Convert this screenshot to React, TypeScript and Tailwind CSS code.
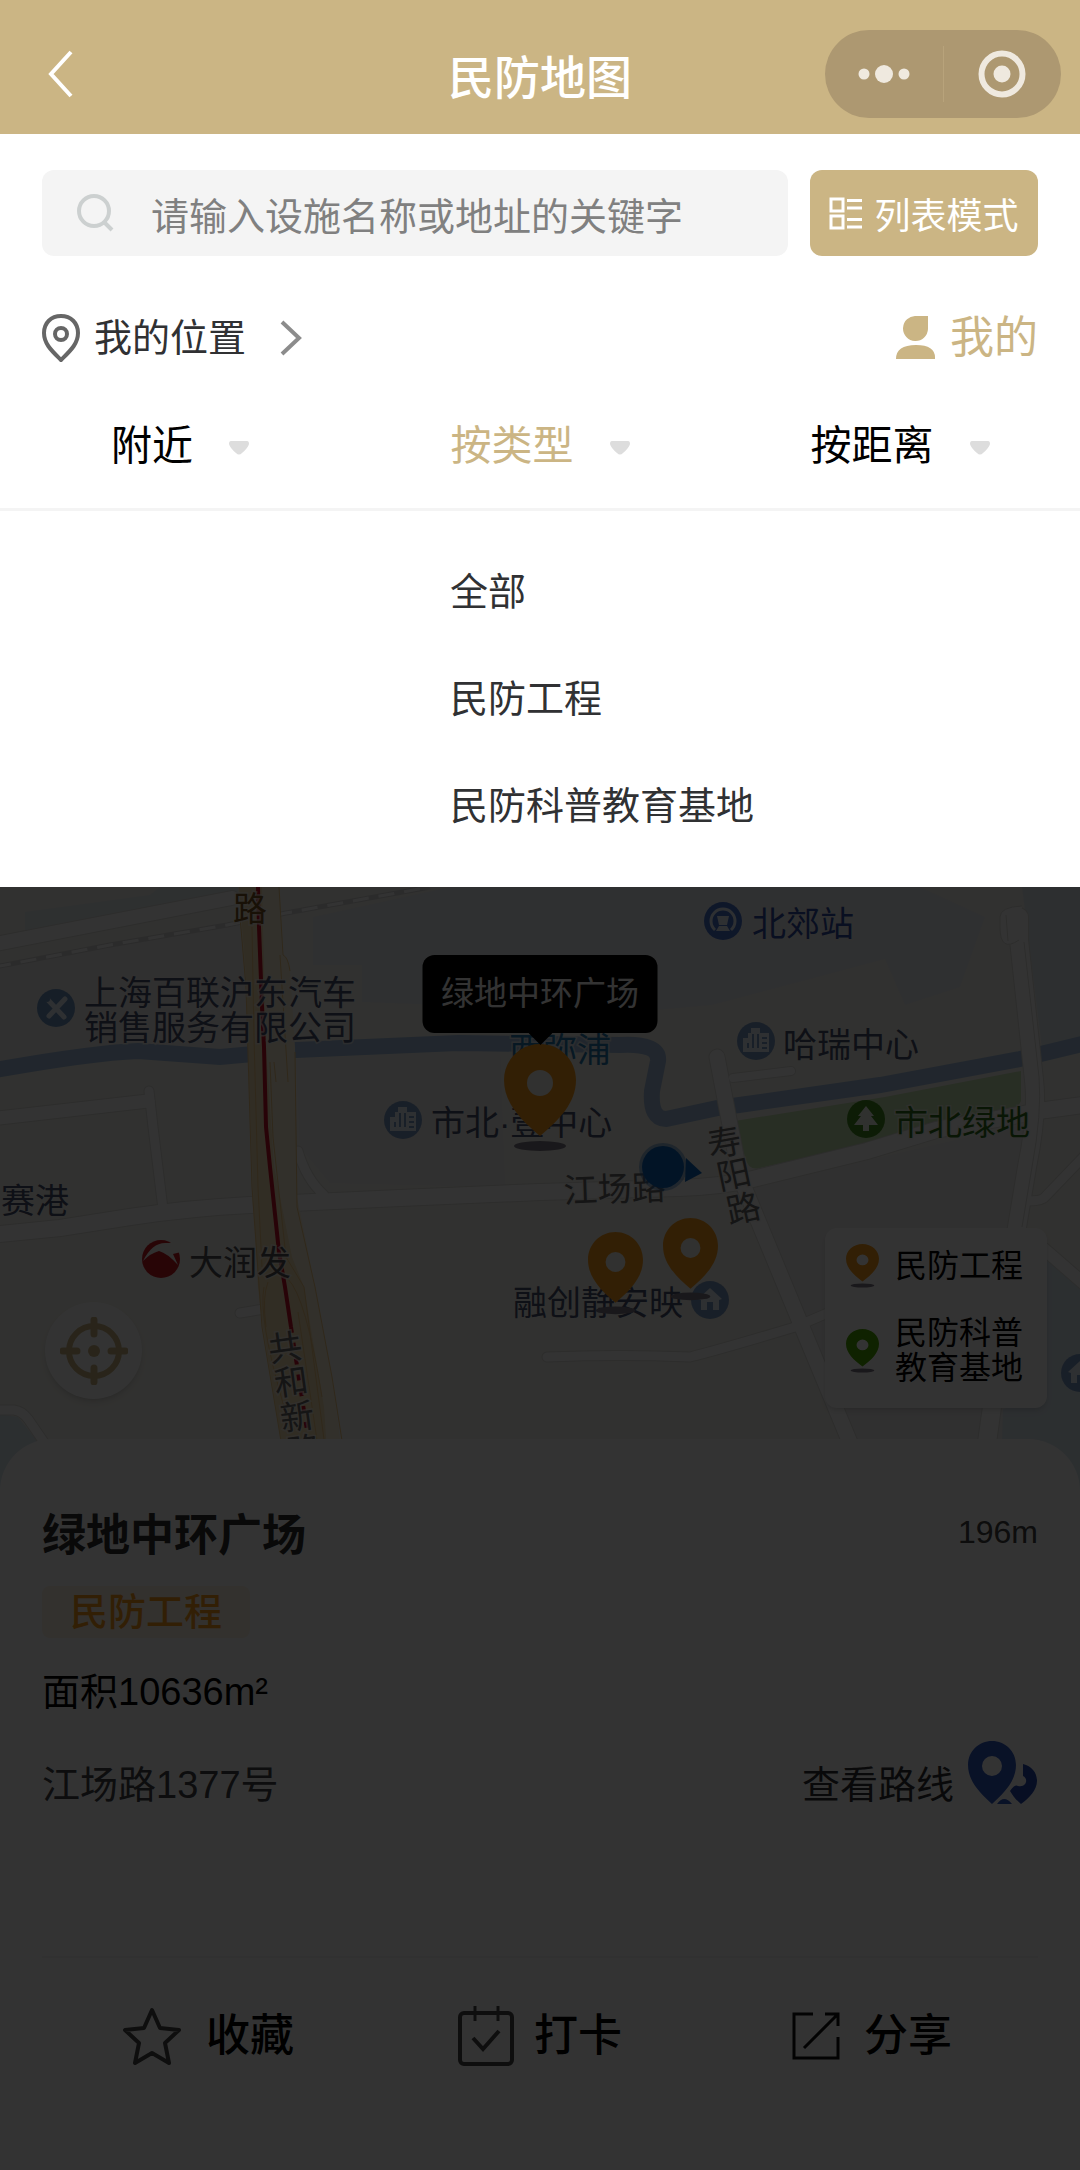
import { useState, type ReactNode } from "react";

const FILTERS = ["附近", "按类型", "按距离"];
const TYPES = ["全部", "民防工程", "民防科普教育基地"];

const ROADS = [
  { d: "M-10 58 L232 11", w: 14 },
  { d: "M-10 232 L148 214", w: 13 },
  { d: "M149 204 L153 240 L163 322", w: 9 },
  { d: "M-10 348 L60 341 L130 330 Q190 321 250 318 L400 311 L540 305 L678 301 Q720 300 753 292 L867 264 L936 243 L1046 223 L1090 217", w: 16 },
  { d: "M298 264 Q306 292 324 308", w: 9 },
  { d: "M717 170 L740 290 L802 440 L856 570", w: 15 },
  { d: "M733 191 L791 184", w: 8 },
  { d: "M1019 30 L1019 53 L1034 193 Q1038 226 1027 280 L1017 340 L985 570", w: 18 },
  { d: "M1090 263 L1045 310 Q1042 314 1028 314", w: 9 },
  { d: "M1044 362 L1090 402", w: 12 },
  { d: "M547 470 Q620 467 690 470 Q722 462 795 440 L830 425", w: 9 },
  { d: "M240 426 L264 422", w: 9 },
  { d: "M-5 523 L14 523 Q22 524 28 532 L50 564", w: 9 },
];

const Pin = ({ color, className }: { color: string; className: string }) => (
  <svg viewBox="0 0 72 108" preserveAspectRatio="none" className={className} aria-hidden="true">
    <ellipse cx="36" cy="102" rx="26" ry="5" fill="#7d7886" />
    <path
      fillRule="evenodd"
      fill={color}
      d="M36 0C16 0 0 16 0 36c0 23 17 40 36 56 19-16 36-33 36-56C72 16 56 0 36 0Zm0 26a13 13 0 1 1 0 26 13 13 0 0 1 0-26Z"
    />
  </svg>
);

const Poi = ({ x, y, color, children }: { x: number; y: number; color: string; children: ReactNode }) => (
  <g transform={`translate(${x} ${y})`}>
    <circle r="19" fill={color} />
    {children}
  </g>
);

const Building = () => (
  <g>
    <path d="M-13 11V-3H-8V-8H-5V-13H4V-8H13V11Z" fill="#e6eef8" />
    <path d="M-8 2V7 M-3-7V7 M2-7V7 M6-3H11 M6 2H11 M6 7H11" stroke="#7b9cc6" strokeWidth="2" />
  </g>
);

const House = () => <path d="M-12 -1 0 -12 12 -1 9 0V10H3V2H-3v8h-6V0Z" fill="#e6eef8" />;

const CityMap = () => (
  <svg
    viewBox="0 0 1080 612"
    preserveAspectRatio="xMidYMin slice"
    className="h-full w-full text-[34px]"
    role="img"
    aria-label="地图"
  >
    <rect width="1080" height="612" fill="#f4f3ed" />
    <path d="M0 78 240 36 250 166 140 160 0 178Z M296 172 500 162 505 300 330 296 300 260Z" fill="#efeeee" />
    <path d="M25 25 150 8 160 0H240V8L25 50Z" fill="#e6eef0" />
    <path d="M313 30 450 0H920L985 30 960 100 905 118 885 72 712 118 600 128 540 122 362 115V78H313Z" fill="#eceff3" />
    <path d="M1022 0H1080V157L1043 170Z" fill="#e2ebee" />
    <path d="M750 300 860 275 1035 235 1028 280 1005 420 1010 560H856L802 440Z" fill="#efeeef" />
    <path d="M1047 372 1080 400V612H1000L1003 522 1047 510Z M0 527 18 530 50 570V612H0Z" fill="#dde8f0" />
    <path d="M735 234 885 210 1021 184V214Q1018 222 1005 224L760 281Q748 284 745 270Z" fill="#c6e3b2" />
    <path
      d="M-10 184Q90 166 138 164L220 170 296 163 458 156 620 158Q660 156 658 174L652 204Q650 232 666 232L718 221 880 198 1020 172 1090 155"
      fill="none"
      stroke="#a3bfe0"
      strokeWidth="16"
    />

    {/* Railway */}
    <path d="M-5 80 110 58 227 38 286 26 430 0" fill="none" stroke="#d6d6d6" strokeWidth="5" />
    <path d="M-5 80 110 58 227 38 286 26 430 0" fill="none" stroke="#fff" strokeWidth="3" strokeDasharray="16 10" />

    {/* Streets, casing first */}
    {ROADS.map(({ d, w }) => (
      <path key={d} d={d} fill="none" stroke="#dededa" strokeWidth={w + 2} strokeLinecap="round" />
    ))}
    {ROADS.map(({ d, w }) => (
      <path key={d} d={d} fill="none" stroke="#fff" strokeWidth={w} strokeLinecap="round" />
    ))}
    <path d="M1019 53Q1000 66 1000 40V30Q1000 20 1022 19" fill="#fff" stroke="#dededa" strokeWidth="1" />
    <path d="M1006 28 1008 54 M1024 55 1039 190 Q1042 226 1032 280L1022 340" fill="none" stroke="#dededa" strokeWidth="1" />

    {/* Elevated highway */}
    <path d="M238 0H279L282 68Q288 70 290 84L295 160 297 310 315 400 332 490 345 590V612H292L281 552 262 440 252 310 248 140Z" fill="#f8efd6" />
    <path d="M239 0H262L266 160 274 280 292 370 304 400 324 520 330 612H290L281 552 263 440 258 400 253 300 248 162 246 90Z" fill="#f5dfb2" />
    <g fill="none" stroke="#efc783" strokeWidth="1">
      <path d="M240 30 246 100 252 300 262 440 282 560" />
      <path d="M252 40 254 150 258 300 262 380" />
      <path d="M270 175 273 250 286 370 304 400 325 560" />
      <path d="M279 0 283 68Q288 70 290 84 M274 175 276 195 M280 68 288 195 M295 165 297 320 315 400 332 490 343 560" />
      <path d="M268 395Q262 410 266 440 M264 400Q258 430 284 520 M288 392Q306 410 322 510 M298 425 318 560" />
    </g>
    <path d="M258 0 259 40 262 120 264 160 266 240 270 280 279 365 285 400 291 440" fill="none" stroke="#c8102a" strokeWidth="4" />
    <path d="M291 440 308 550" fill="none" stroke="#c8102a" strokeWidth="4" strokeDasharray="6 10" />

    <Poi x={56} y={121} color="#6f97c4">
      <path d="M-8-8 8 9 M9-9-7 8" stroke="#e6eef8" strokeWidth="5" strokeLinecap="round" />
      <circle cx="-9" cy="-9" r="3" fill="#6f97c4" />
    </Poi>
    <Poi x={723} y={34} color="#4872ce">
      <path d="M-8 9A12 12 0 1 1 8 9" fill="none" stroke="#e6eef8" strokeWidth="3" />
      <path d="M-6-5H6L4 4H-4Z M-7 10H7L4 5H-4Z" fill="#e6eef8" />
    </Poi>
    <Poi x={756} y={154} color="#7b9cc6"><Building /></Poi>
    <Poi x={403} y={233} color="#7b9cc6"><Building /></Poi>
    <Poi x={866} y={232} color="#418c1f">
      <path d="M0-13 8-3H5L12 6H3V12H-3V6H-12L-5-3H-8Z" fill="#eef5ea" />
    </Poi>
    <Poi x={161} y={372} color="#c51a22">
      <path d="M-18 2Q-9-16 4-16L19-16 20-7 12-5 17 6Q6-6-2-8-10-6-18 2Z" fill="#f4f3ed" />
    </Poi>
    <Poi x={710} y={413} color="#7b9cc6"><House /></Poi>
    <Poi x={1080} y={486} color="#7b9cc6"><House /></Poi>

    {/* Place names */}
    <g stroke="#f4f3ed" strokeWidth="3" paintOrder="stroke" strokeOpacity="0.7">
      <g fill="#495270">
        <text x="84" y="118">上海百联沪东汽车</text>
        <text x="84" y="153">销售服务有限公司</text>
        <text x="783" y="170">哈瑞中心</text>
        <text x="431" y="248">市北·壹中心</text>
        <text x="513" y="428">融创静安映</text>
        <text x="1" y="326">赛港</text>
      </g>
      <text x="752" y="49" fill="#2f4da4">北郊站</text>
      <text x="509" y="175" fill="#2577ae">西弥浦</text>
      <text x="894" y="248" fill="#31701d">市北绿地</text>
      <text x="189" y="388" fill="#505055">大润发</text>
      <text x="233" y="34" fill="#7b5523">路</text>
      <g fill="#68686b">
        <text x="564" y="316" transform="rotate(-2 564 316)">江场路</text>
        <text x="707" y="268" transform="rotate(-10 722 254)">寿</text>
        <text x="717" y="300" transform="rotate(-12 733 288)">阳</text>
        <text x="726" y="334" transform="rotate(-12 742 320)">路</text>
        <text x="268" y="473" transform="rotate(-8 284 460)">共</text>
        <text x="274" y="507" transform="rotate(-8 291 493)">和</text>
        <text x="280" y="542" transform="rotate(-8 297 528)">新</text>
        <text x="286" y="576" transform="rotate(-8 302 560)">路</text>
      </g>
    </g>

    {/* Current position */}
    <circle cx="663" cy="280" r="24" fill="#1b6cc4" opacity="0.4" />
    <circle cx="663" cy="280" r="21" fill="#0d66bd" />
    <path d="M686 271 702 286 685 295Z" fill="#0d66bd" />
  </svg>
);

const FilterBar = ({ active, onSelect }: { active: string; onSelect: (name: string) => void }) => (
  <div className="grid grid-cols-3 border-b-3 border-[#f4f4f4] pb-8">
    {FILTERS.map((name) => (
      <button
        key={name}
        type="button"
        onClick={() => onSelect(name)}
        className={`flex items-center justify-center gap-9 text-[41px] leading-[60px] ${
          name === active ? "text-[#cbb584]" : "text-black"
        }`}
      >
        {name}
        <svg viewBox="0 0 20 14" className="mt-1 h-3.5 w-5" aria-hidden="true">
          <path d="M2 0H18Q20 0 20 3 19 7 13 12 10 15 7 12 1 7 0 3 0 0 2 0Z" fill="#ddd" />
        </svg>
      </button>
    ))}
  </div>
);

const Legend = () => (
  <ul className="absolute top-[341px] right-[33px] flex w-[222px] flex-col gap-7 rounded-xl bg-white pt-4 pb-[22px] pl-[21px] text-[32px] leading-[35px] text-black shadow-md">
    <li className="flex items-center gap-4">
      <Pin color="#fa9c1c" className="h-11 w-[33px]" />
      民防工程
    </li>
    <li className="flex items-center gap-4">
      <Pin color="#4da800" className="h-11 w-[33px]" />
      <span>
        民防科普
        <br />
        教育基地
      </span>
    </li>
  </ul>
);

const PlaceSheet = () => (
  <section className="relative -mt-15 flex-1 rounded-t-[52px] bg-white px-[42px] pt-[67px]">
    <div className="flex items-start justify-between">
      <h2 className="text-[44px] leading-[60px] font-bold text-[#303030]">绿地中环广场</h2>
      <span className="text-[32px] leading-[52px] text-[#404040]">196m</span>
    </div>
    <span className="mt-5 inline-block rounded-lg bg-[#fef4e6] px-7 text-[38px] leading-[52px] font-medium text-[#fa9c1c]">
      民防工程
    </span>
    <p className="mt-[26px] text-[38px] leading-[56px] text-black">面积10636m²</p>
    <div className="mt-[21px] flex items-end justify-between text-[38px] leading-[40px]">
      <p className="text-[#404246]">江场路1377号</p>
      <button type="button" className="flex items-end gap-3.5 text-[#303133]">
        查看路线
        <svg viewBox="0 0 70 64" className="h-16 w-[70px]" aria-hidden="true">
          <path
            fillRule="evenodd"
            fill="#3159c4"
            d="M24 0C11 0 0 10 0 24c0 16 12 28 24 39 12-11 24-23 24-39C48 10 37 0 24 0Zm0 15a10 10 0 1 1 0 20 10 10 0 0 1 0-20Z"
          />
          <path fill="#2448b0" d="M55 23c9 2 14 9 14 17 0 9-8 17-16 23-5-4-8-8-11-13q5-7 8-5c8 2 11-7 5-10Z" />
          <path fill="#3159c4" d="M29 63q7-10 15 0Z" />
        </svg>
      </button>
    </div>
    <div className="mt-[151px] grid grid-cols-3 border-t-2 border-[#f2f2f2] pt-12 text-[44px] leading-[60px] font-medium text-black">
      <button type="button" className="flex items-center justify-center gap-6">
        <svg viewBox="0 0 60 60" className="size-15" aria-hidden="true">
          <path
            d="M30 4 38 22 57 24 43 37 47 57 30 47 13 57 17 37 3 24 22 22Z"
            fill="none"
            stroke="#484848"
            strokeWidth="4"
            strokeLinejoin="round"
          />
        </svg>
        收藏
      </button>
      <button type="button" className="flex items-center justify-center gap-5">
        <svg viewBox="0 0 56 60" className="h-15 w-14" fill="none" stroke="#484848" strokeWidth="4" aria-hidden="true">
          <rect x="2" y="7" width="52" height="51" rx="4" />
          <path d="M17 0V15 M40 0V15" strokeWidth="3" />
          <path d="M15 32 25 43 41 25" />
        </svg>
        打卡
      </button>
      <button type="button" className="flex items-center justify-center gap-6">
        <svg viewBox="0 0 48 48" className="size-12" fill="none" stroke="#101010" strokeWidth="3" aria-hidden="true">
          <path d="M21 2H2V46H46V25 M33 2H46V14 M46 2 12 36" />
        </svg>
        分享
      </button>
    </div>
  </section>
);

export default function App() {
  const [activeFilter, setActiveFilter] = useState("按类型");

  return (
    <div className="flex min-h-screen flex-col bg-white font-['Liberation_Sans','Noto_Sans_CJK_SC',sans-serif]">
      <header className="relative flex h-[134px] items-center justify-between bg-[#cbb584] pt-3.5 pr-[19px] pl-12 font-['Noto_Sans_CJK_SC',sans-serif]">
        <button type="button" aria-label="返回">
          <svg viewBox="0 0 26 48" className="h-12 w-[26px]" aria-hidden="true">
            <path d="M23 2 3 24 23 46" fill="none" stroke="#fff" strokeWidth="4" />
          </svg>
        </button>
        <h1 className="absolute inset-x-0 text-center text-[46px] leading-[60px] font-medium text-white">民防地图</h1>
        <div className="relative flex h-[88px] w-[236px] items-center rounded-full bg-[#ad9871]">
          <button type="button" aria-label="更多" className="flex flex-1 justify-center">
            <svg viewBox="0 0 52 20" className="h-5 w-[52px]" fill="#efe9df" aria-hidden="true">
              <circle cx="6" cy="10" r="5.5" />
              <circle cx="26" cy="10" r="9" />
              <circle cx="46" cy="10" r="5.5" />
            </svg>
          </button>
          <span className="h-14 w-px bg-[#b8a37b]" />
          <button type="button" aria-label="关闭" className="flex flex-1 justify-center">
            <svg viewBox="0 0 48 48" className="size-12" aria-hidden="true">
              <circle cx="24" cy="24" r="20.5" fill="none" stroke="#efe9df" strokeWidth="6" />
              <circle cx="24" cy="24" r="8.5" fill="#efe9df" />
            </svg>
          </button>
        </div>
      </header>

      <div className="flex gap-[22px] px-[42px] pt-9 font-['Noto_Sans_CJK_SC',sans-serif]">
        <label className="flex h-[86px] min-w-0 flex-1 items-center gap-9 rounded-xl bg-[#f4f4f4] pl-[35px]">
          <svg viewBox="0 0 38 38" className="size-[38px] shrink-0" fill="none" stroke="#ccd0d0" strokeWidth="4" aria-hidden="true">
            <circle cx="17" cy="17" r="15" />
            <path d="M28 29 35 36" />
          </svg>
          <input
            type="text"
            aria-label="搜索设施"
            placeholder="请输入设施名称或地址的关键字"
            className="h-full w-full min-w-0 bg-transparent text-[38px] outline-none placeholder:text-[#808080]"
          />
        </label>
        <button
          type="button"
          className="flex h-[86px] w-[228px] items-center justify-center gap-3 rounded-xl bg-[#cbb584] text-[36px] text-white"
        >
          <svg viewBox="0 0 33 33" className="size-[33px]" fill="none" stroke="#fff" strokeWidth="3" aria-hidden="true">
            <path d="M2 2H14V14H2Z M2 19H14V31H2Z M18 3.5H33 M18 11H33 M18 22.5H33 M18 30H33" />
          </svg>
          列表模式
        </button>
      </div>

      <div className="flex items-center justify-between px-[42px] pt-[50px] pb-[46px] leading-[64px]">
        <button type="button" className="flex items-center gap-3.5 text-[38px] text-[#303133]">
          <svg viewBox="0 0 38 48" className="h-12 w-[38px]" fill="none" stroke="#666" strokeWidth="4" aria-hidden="true">
            <path d="M19 2C9 2 2 9 2 19c0 11 8 18 17 27 9-9 17-16 17-27C36 9 29 2 19 2Z" />
            <circle cx="19" cy="20" r="6" />
          </svg>
          我的位置
          <svg viewBox="0 0 22 36" className="ml-5 h-9 w-[22px]" fill="none" stroke="#8c8c8c" strokeWidth="4" aria-hidden="true">
            <path d="M2 2 19 18 2 34" />
          </svg>
        </button>
        <button type="button" className="flex items-center gap-3.5 text-[44px] text-[#cbb584]">
          <svg viewBox="0 0 40 44" className="h-11 w-10" fill="currentColor" aria-hidden="true">
            <path d="M20 0H32V13A12.5 12.5 0 1 1 20 0Z M0 43Q0 29 20 29T39 43Z" />
          </svg>
          我的
        </button>
      </div>

      <FilterBar active={activeFilter} onSelect={setActiveFilter} />

      <ul className="ml-auto w-7/12 pt-7 pb-[27px] text-[38px] leading-[107px] text-[#303133]">
        {TYPES.map((type) => (
          <li key={type}>
            <button type="button" className="block w-full text-left">
              {type}
            </button>
          </li>
        ))}
      </ul>

      <main className="relative flex flex-1 flex-col">
        <div className="relative h-[612px] overflow-hidden">
          <CityMap />

          {/* Markers */}
          <Pin color="#fa9c1c" className="absolute top-[157px] left-[504px] h-[108px] w-[72px]" />
          <Pin color="#fa9c1c" className="absolute top-[345px] left-[588px] h-[83px] w-[55px]" />
          <Pin color="#fa9c1c" className="absolute top-[331px] left-[663px] h-[83px] w-[55px]" />
          <div className="absolute top-[68px] left-1/2 flex h-[78px] w-[235px] -translate-x-1/2 items-center justify-center rounded-xl bg-black text-[33px] text-white">
            绿地中环广场
            <svg viewBox="0 0 24 12" className="absolute top-full h-3 w-6" aria-hidden="true">
              <path d="M0 0H24L12 12Z" />
            </svg>
          </div>

          <button
            type="button"
            aria-label="定位"
            className="absolute top-[415px] left-[45px] flex size-[97px] items-center justify-center rounded-full bg-white shadow-md"
          >
            <svg viewBox="0 0 68 68" className="size-[68px]" fill="none" stroke="#cbb584" strokeWidth="6" aria-hidden="true">
              <circle cx="34" cy="34" r="25" />
              <path d="M34 3V17 M34 51V65 M3 34H17 M51 34H65" strokeWidth="7" strokeLinecap="round" />
              <circle cx="34" cy="34" r="6" fill="#cbb584" stroke="none" />
            </svg>
          </button>
          <Legend />
        </div>
        <PlaceSheet />
        <div className="pointer-events-none absolute inset-0 bg-black/80" />
      </main>
    </div>
  );
}
